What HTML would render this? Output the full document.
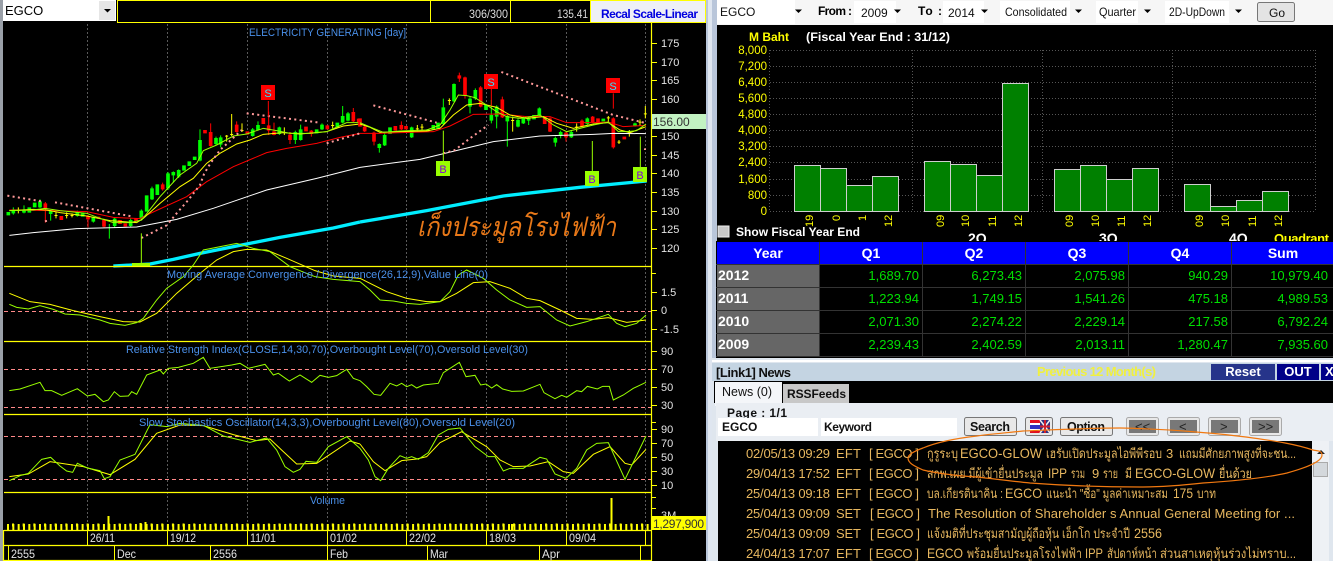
<!DOCTYPE html>
<html><head><meta charset="utf-8"><title>EGCO</title>
<style>
html,body{margin:0;padding:0;background:#000;width:1333px;height:561px;overflow:hidden}
svg{display:block}
text{font-family:"Liberation Sans","Noto Sans CJK SC",sans-serif;white-space:pre}
.t{fill:#4a90ea;font-size:11px}
.ax{fill:#e4e4e4;font-size:11px}
.dt{fill:#e4e4e4;font-size:12px}
.yl{fill:#ffff00;font-size:11.500px;text-anchor:end}
.bl{fill:#ffff00;font-size:11px}
.v{fill:#00e000;font-size:13px;text-anchor:end}
.y{fill:#fff;font-size:14px;font-weight:bold}
.h{fill:#fff;font-size:14px;font-weight:bold;text-anchor:middle}
.n{fill:#e8b860;font-size:13px}
.s{fill:#111;font-size:12px}
.b{fill:#000;font-size:12px;font-weight:bold}
</style></head><body>
<svg width="1333" height="561" viewBox="0 0 1333 561" xmlns="http://www.w3.org/2000/svg">
<rect width="1333" height="561" fill="#000"/>
<!-- left strip -->
<rect x="0" width="3" height="561" fill="#9aa0a8"/>
<!-- splitter -->
<rect x="706" width="11" height="561" fill="#b9c6da"/>
<rect x="708" width="4" height="561" fill="#dfe6f0"/>

<!-- LEFT top bar -->
<rect x="3" y="0" width="113" height="21" fill="#fff"/>
<rect x="99" y="1" width="16" height="19" fill="#e6e6e6"/>
<path d="M104 9h7l-3.500 3.500z" fill="#000"/>
<text x="5" y="15" style="font-size:13px" fill="#000">EGCO</text>
<rect x="117.500" y="0.500" width="588" height="22" fill="none" stroke="#ff0"/>
<path d="M430.500 0V22M510.500 0V22M590.500 0V22" stroke="#ff0"/>
<rect x="591" y="1" width="114" height="21" fill="#eef0f6"/>
<text x="469" y="18" style="font-size:12px" fill="#ddd" textLength="39" lengthAdjust="spacingAndGlyphs">306/300</text>
<text x="557" y="18" style="font-size:12px" fill="#ddd" textLength="31" lengthAdjust="spacingAndGlyphs">135.41</text>
<text x="601" y="18" style="font-size:12px;font-weight:bold" fill="#0000e0" textLength="97">Recal Scale-Linear</text>

<!-- vertical grid -->
<path d="M87.500 24V530M167.500 24V530M247.500 24V530M327.500 24V530M406.500 24V530M486.500 24V530M566.500 24V530M645.500 24V530" stroke="#5a5a5a" stroke-dasharray="2 2"/>

<text x="249" y="36" class="t" textLength="157" lengthAdjust="spacingAndGlyphs">ELECTRICITY GENERATING [day]</text>

<!-- CHART part 1 (3x coords) -->
<g transform="scale(.33333)" fill="none">
<path stroke="#00ff00" stroke-width="3" d="M40 622V644M72 616V640M120 598V624M152 630V662M232 632V650M280 650V668M328 672V716M344 652V682M392 656V682M424 628V660M456 560V600M504 516V570M520 514V548M536 508V534M600 388V484M648 410V436M662 406V442M758 384V410M774 364V392M838 380V405M886 392V432M902 374V422M966 370V390M1028 318V370M1044 336V364"/>
<path stroke="#00ff00" stroke-width="11" d="M25 636V646M40 628V640M72 630V638M88 622V638M104 608V622M120 604V622M152 632V642M232 636V648M248 640V650M280 652V665M344 656V678M392 660V678M424 632V655M440 586V635M456 565V598M472 553V585M504 520V565M520 516V526M536 510V530M552 496V512M568 484V498M584 470V480M600 420V482M648 414V432M662 412V434M758 388V408M774 375V390M838 382V402M886 396V420M902 388V420M950 388V400M966 374V388M1012 368V382M1028 348V368M1044 340V362"/>
<path stroke="#ff0000" stroke-width="3" d="M136 606V668M264 645V682M488 548V572M632 370V440M710 364V398M806 335V405M822 368V406M870 396V432M934 390V410M1060 324V366M312 656V682"/>
<path stroke="#ff0000" stroke-width="11" d="M136 610V625M184 648V660M264 648V658M296 650V656M312 660V680M360 660V672M376 670V680M408 655V665M488 553V568M615 390V400M632 396V438M710 374V396M742 394V404M790 354V372M806 376V392M822 394V405M870 404V420M918 380V394M934 392V402M982 376V388M1060 336V364M1076 356V366"/>
<path stroke="#ffff00" stroke-width="3" d="M55 622V640M168 635V655M200 637V655M216 640V652M680 405V425M695 342V408M726 370V396M853 382V405M998 365V385"/>
<path stroke="#ffff00" stroke-width="9" d="M55 630V633M168 645V648M200 645V648M216 645V648M680 407V410M695 402V405M726 390V393M853 396V399M998 375V378"/>
<path stroke="#ffffff" stroke-width="3" d="M28 706L100 698L230 686L410 681L530 658L640 625L800 570L950 535L1080 502"/>
<path stroke="#ff0000" stroke-width="3" d="M28 630L160 632L260 635L340 652L420 656L440 645L560 590L620 545L700 500L800 458L860 445L950 430L1020 412L1080 400"/>
<path stroke="#ffff00" stroke-width="3" d="M28 632L100 628L140 630L180 638L260 648L330 662L410 668L430 655L480 610L540 560L580 535L620 490L660 460L710 432L750 420L790 403L850 398L900 402L980 395L1030 378L1080 372"/>
<path stroke="#99ff00" stroke-width="3" d="M28 632L100 630L135 625L180 632L260 640L300 655L340 668L390 668L425 660L480 590L540 525L590 490L610 452L650 435L700 408L740 402L790 385L830 392L870 400L930 400L980 395L1040 368L1080 368"/>
<path stroke="#00eeff" stroke-width="10" d="M340 798L450 792L520 778L600 760L740 732L840 712L1000 684L1080 666"/>
<path stroke="#ff9999" stroke-width="6" stroke-dasharray="6 10" d="M22 587L130 605M135 664L150 660M165 607L400 650M424 714L500 676L530 640L565 600L600 555L612 522L630 492L660 450L680 432L725 390M740 340L960 368M980 430L1080 400"/>
<path stroke="#ff0000" stroke-width="3" d="M805 303V350"/>
<path stroke="#99ff00" stroke-width="3" d="M424 700V790"/>
</g>
<rect x="261" y="85" width="14" height="15" fill="#f00"/>
<text x="268" y="97" text-anchor="middle" fill="#33e0ff" style="font-size:11px">S</text>

<!-- CHART part 2 -->
<g transform="translate(360,0) scale(.33333)" fill="none">
<path stroke="#00ff00" stroke-width="3" d="M74 400V438M58 430V458M155 380V414M250 296V375M282 250V306M330 290V340M346 265V300M394 300V370M410 316V385M442 345V440M474 355V382M490 350V372M506 350V375M538 322V348M586 410V440M602 392V415M634 392V414M682 352V375M825 368V380"/>
<path stroke="#00ff00" stroke-width="11" d="M58 432V444M74 405V436M90 382V402M155 382V412M203 388V396M220 375V388M234 368V385M250 322V372M282 252V304M330 296V320M346 270V296M378 315V330M394 345V362M410 320V350M442 348V364M474 360V380M490 355V370M506 355V362M522 345V358M538 325V345M586 414V428M602 396V408M634 396V412M682 355V372M730 356V364M825 370V378"/>
<path stroke="#ff0000" stroke-width="3" d="M42 395V436M124 364V390M298 218V246M315 230V296M362 258V322M427 290V354M570 352V396M618 396V425M666 358V382M698 348V368M760 352V446M14 375V396"/>
<path stroke="#ff0000" stroke-width="11" d="M0 355V380M14 380V394M42 398V425M106 378V392M124 375V388M138 378V388M298 226V236M315 232V286M362 262V320M427 298V352M554 348V372M570 355V395M618 398V412M666 362V380M698 350V366M714 355V372M760 355V442M793 410V418"/>
<path stroke="#ffff00" stroke-width="3" d="M172 375V395M186 372V392M268 295V315M458 350V395M650 370V395M745 348V368M777 420V432M808 390V410M840 358V378M856 318V355"/>
<path stroke="#ffff00" stroke-width="9" d="M172 385V388M186 380V383M268 300V303M458 360V363M650 380V383M745 352V355M777 425V428M808 395V398M840 365V368M856 340V343"/>
<path stroke="#ffffff" stroke-width="3" d="M0 502L180 478L400 425L540 408L700 403L760 400L858 401"/>
<path stroke="#ff0000" stroke-width="3" d="M0 400L60 400L220 395L270 378L340 343L420 342L500 350L570 350L620 368L700 368L745 366L790 380L858 376"/>
<path stroke="#ffff00" stroke-width="3" d="M0 372L30 382L60 397L120 395L200 393L240 385L280 345L320 315L360 310L410 322L450 345L500 355L550 350L590 370L640 385L700 372L745 368L780 390L810 398L858 380"/>
<path stroke="#99ff00" stroke-width="3" d="M0 368L40 385L70 397L120 393L200 390L240 375L270 330L295 285L320 287L345 293L375 312L410 335L440 350L480 355L540 345L580 375L620 395L660 385L700 375L745 366L775 395L800 395L830 392L858 372"/>
<path stroke="#00eeff" stroke-width="10" d="M0 666L200 632L430 588L660 562L860 543"/>
<path stroke="#ff9999" stroke-width="6" stroke-dasharray="6 10" d="M40 316L230 368M250 460L285 450L330 415L385 375M424 216L760 345L860 370M855 445V450"/>
<path stroke="#ff0000" stroke-width="3" d="M394 266V318M760 280V326"/>
<path stroke="#99ff00" stroke-width="3" d="M250 392V484M697 423V514M841 410V502"/>
</g>
<rect x="484" y="74" width="14" height="15" fill="#f00"/>
<text x="491" y="86" text-anchor="middle" fill="#33e0ff" style="font-size:11px">S</text>
<rect x="606" y="78" width="14" height="15" fill="#f00"/>
<text x="613" y="90" text-anchor="middle" fill="#33e0ff" style="font-size:11px">S</text>
<rect x="436" y="161" width="14" height="15" fill="#99ff00"/>
<text x="443" y="173" text-anchor="middle" fill="#8000e0" style="font-size:11px">B</text>
<rect x="585" y="171" width="14" height="15" fill="#99ff00"/>
<text x="592" y="183" text-anchor="middle" fill="#8000e0" style="font-size:11px">B</text>
<rect x="633" y="167" width="14" height="15" fill="#99ff00"/>
<text x="640" y="179" text-anchor="middle" fill="#8000e0" style="font-size:11px">B</text>
<rect x="132" y="263" width="18" height="3" fill="#99ff00"/>

<!-- Thai caption -->
<text x="417" y="236" fill="#e87818" font-style="italic" style="font-size:27px" textLength="199" lengthAdjust="spacingAndGlyphs">เก็งประมูลโรงไฟฟ้า</text>

<!-- panel lines -->
<path d="M4 266.500H651M4 341.500H651M4 414.500H651M4 492.500H651M4 530.500H651M4 545.500H651M4 560.500H651M651.500 22V561M3.500 530V561" stroke="#ffff00" stroke-width="1.200"/>
<path d="M87.500 530V545M167.500 530V545M247.500 530V545M327.500 530V545M406.500 530V545M486.500 530V545M566.500 530V545M645.500 530V545M8.500 545V560M114.500 545V560M210.500 545V560M327.500 545V560M427.500 545V560M539.500 545V560M640.500 545V560" stroke="#ffff00"/>

<!-- dashed levels -->
<path d="M4 311.500H651M4 369.500H651M4 407.500H651M4 436.500H651M4 479.500H651" stroke="#ff8888" stroke-dasharray="4 3"/>

<!-- Indicators -->
<g transform="translate(0,260) scale(.33333)" fill="none" stroke-width="3">
<path stroke="#ffff00" d="M28 100L90 125L150 133L220 152L300 170L370 185L420 186L470 160L530 100L600 40L650 0L700 -25L740 -32L800 -30L860 -5L945 32L1000 48L1080 55"/>
<path stroke="#99ff00" d="M28 133L50 142L85 147L120 137L160 148L195 162L240 165L300 180L330 190L375 196L410 188L430 175L470 120L500 85L550 50L580 15L610 -30L670 -42L710 -50L760 -35L810 -25L870 20L945 50L1000 58L1080 65"/>
<path stroke="#99ff00" d="M28 392L60 387L120 367L135 392L155 392L185 406L232 386L262 408L285 403L310 425L325 420L343 395L360 409L385 408L395 395L410 403L440 345L480 330L490 342L505 325L535 322L580 310L610 292L630 325L695 315L720 310L745 325L795 313L820 345L835 340L868 363L900 345L935 367L960 346L985 352L1010 347L1040 328L1060 355L1080 362"/>
<path stroke="#ffff00" d="M28 650L85 642L150 605L250 620L330 644L405 598L470 520L540 495L610 497L700 524L770 542L810 537L850 575L890 612L950 610L1050 543L1080 552"/>
<path stroke="#99ff00" d="M28 662L60 647L85 640L125 598L152 592L180 618L200 633L218 637L232 610L262 624L300 632L313 656L330 650L360 600L405 583L450 494L500 500L540 490L610 496L670 528L750 547L800 534L830 570L855 620L880 637L900 628L918 604L950 607L985 560L1040 530L1080 565"/>
</g>
<g transform="translate(360,260) scale(.33333)" fill="none" stroke-width="3">
<path stroke="#ffff00" d="M0 55L80 95L140 115L200 125L240 125L290 100L340 68L390 65L450 85L500 115L540 122L600 150L650 175L700 178L745 173L800 187L858 180"/>
<path stroke="#99ff00" d="M0 65L30 90L60 120L100 123L140 130L180 133L240 125L270 95L295 45L320 30L370 55L410 90L450 120L500 142L540 140L590 180L630 198L680 185L745 163L770 190L795 200L830 190L858 165"/>
<path stroke="#99ff00" d="M0 362L20 380L42 403L62 406L90 370L110 378L125 370L140 380L155 374L170 384L190 375L235 370L250 338L275 322L298 307L318 350L345 346L362 375L378 372L395 384L410 374L428 387L455 394L490 393L540 373L552 398L585 416L605 406L620 412L650 392L665 395L682 379L712 387L728 379L748 379L760 420L790 405L820 385L858 367"/>
<path stroke="#ffff00" d="M0 552L40 605L75 632L125 602L170 597L200 590L240 548L305 515L380 560L420 600L460 620L510 618L565 605L610 635L640 640L700 583L750 560L795 610L815 615L858 568"/>
<path stroke="#99ff00" d="M0 565L25 600L45 650L62 662L85 625L120 587L140 595L155 590L175 598L205 578L235 525L265 508L300 504L345 560L385 590L405 590L430 633L450 625L490 625L540 592L560 597L585 642L618 655L650 625L680 570L710 550L745 548L795 658L858 528"/>
</g>

<!-- Volume -->
<path d="M7 527H650" stroke="#ffff00" stroke-width="6" stroke-dasharray="2 3.330"/>
<path d="M12 525H650" stroke="#ffff00" stroke-width="3" stroke-dasharray="2 8.660"/>
<path d="M108.500 516V530M140.500 523V530M145.500 522V530M611.500 498V530M512 524V530" stroke="#ffff00" stroke-width="2"/>

<!-- Indicator titles -->
<text x="167" y="278" class="t" textLength="321" lengthAdjust="spacingAndGlyphs">Moving Average Convergence / Divergence(26,12,9),Value Line(0)</text>
<text x="126" y="353" class="t" textLength="402" lengthAdjust="spacingAndGlyphs">Relative Strength Index(CLOSE,14,30,70),Overbought Level(70),Oversold Level(30)</text>
<text x="139" y="426" class="t" textLength="376" lengthAdjust="spacingAndGlyphs">Slow Stochastics Oscillator(14,3,3),Overbought Level(80),Oversold Level(20)</text>
<text x="310" y="504" class="t" textLength="35" lengthAdjust="spacingAndGlyphs">Volume</text>

<!-- Date labels -->
<text x="90" y="542" class="dt" textLength="25" lengthAdjust="spacingAndGlyphs">26/11</text><text x="170" y="542" class="dt" textLength="26" lengthAdjust="spacingAndGlyphs">19/12</text><text x="250" y="542" class="dt" textLength="26" lengthAdjust="spacingAndGlyphs">11/01</text><text x="330" y="542" class="dt" textLength="27" lengthAdjust="spacingAndGlyphs">01/02</text><text x="409" y="542" class="dt" textLength="27" lengthAdjust="spacingAndGlyphs">22/02</text><text x="489" y="542" class="dt" textLength="27" lengthAdjust="spacingAndGlyphs">18/03</text><text x="569" y="542" class="dt" textLength="27" lengthAdjust="spacingAndGlyphs">09/04</text>
<text x="11" y="558" class="dt" textLength="24" lengthAdjust="spacingAndGlyphs">2555</text><text x="117" y="558" class="dt" textLength="19" lengthAdjust="spacingAndGlyphs">Dec</text><text x="213" y="558" class="dt" textLength="24" lengthAdjust="spacingAndGlyphs">2556</text><text x="330" y="558" class="dt" textLength="18" lengthAdjust="spacingAndGlyphs">Feb</text><text x="430" y="558" class="dt" textLength="18" lengthAdjust="spacingAndGlyphs">Mar</text><text x="542" y="558" class="dt" textLength="18" lengthAdjust="spacingAndGlyphs">Apr</text>

<!-- Axis ticks -->
<path d="M652 43.500h5M652 62.500h5M652 80.500h5M652 99.500h5M652 136.500h5M652 155.500h5M652 173.500h5M652 192.500h5M652 211.500h5M652 229.500h5M652 248.500h5M652 273.500h4M652 292.500h5M652 310.500h5M652 329.500h5M652 351.500h5M652 369.500h5M652 387.500h5M652 405.500h5M652 422.500h4M652 429.500h5M652 443.500h5M652 457.500h5M652 471.500h5M652 485.500h5M652 497.500h4M652 508.500h4" stroke="#ffff00"/>
<text x="661" y="47" class="ax">175</text><text x="661" y="66" class="ax">170</text><text x="661" y="84" class="ax">165</text><text x="661" y="103" class="ax">160</text><text x="661" y="140" class="ax">150</text><text x="661" y="159" class="ax">145</text><text x="661" y="177" class="ax">140</text><text x="661" y="196" class="ax">135</text><text x="661" y="215" class="ax">130</text><text x="661" y="233" class="ax">125</text><text x="661" y="252" class="ax">120</text>
<text x="661" y="296" class="ax">1.5</text><text x="661" y="314" class="ax">0</text><text x="660" y="333" class="ax">-1.5</text>
<text x="661" y="355" class="ax">90</text><text x="661" y="373" class="ax">70</text><text x="661" y="391" class="ax">50</text><text x="661" y="409" class="ax">30</text>
<text x="661" y="433" class="ax">90</text><text x="661" y="447" class="ax">70</text><text x="661" y="461" class="ax">50</text><text x="661" y="475" class="ax">30</text><text x="661" y="489" class="ax">10</text>
<text x="661" y="519" class="ax">3M</text>
<rect x="652" y="114" width="54" height="15" fill="#c2f2c2"/>
<text x="653" y="126" style="font-size:12px" fill="#333">156.00</text>
<rect x="652" y="516" width="54" height="14" fill="#ffff00"/>
<text x="653" y="528" style="font-size:12px" fill="#333" textLength="51">1,297,900</text>

<!-- RIGHT top bar -->
<rect x="717" y="0" width="616" height="25" fill="#f6f6f6"/>
<rect x="717" y="0" width="78" height="24" fill="#fff"/>
<rect x="854" y="1" width="42" height="22" fill="#fff"/>
<rect x="943" y="1" width="41" height="22" fill="#fff"/>
<rect x="1000" y="1" width="70" height="22" fill="#fff"/>
<rect x="1096" y="1" width="42" height="22" fill="#fff"/>
<rect x="1165" y="1" width="64" height="22" fill="#fff"/>
<path d="M795 9.500h7l-3.500 3.500zM894 9.500h7l-3.500 3.500zM981 9.500h7l-3.500 3.500zM1075 9.500h7l-3.500 3.500zM1144 9.500h7l-3.500 3.500zM1235 9.500h7l-3.500 3.500z" fill="#000"/>
<text x="720" y="16" class="s">EGCO</text>
<text x="818" y="15" class="b" style="font-size:12px" textLength="34">From :</text>
<text x="861" y="17" class="s">2009</text>
<text x="918" y="15" class="b" textLength="24">To :</text>
<text x="948" y="17" class="s">2014</text>
<text x="1005" y="16" class="s" textLength="62" lengthAdjust="spacingAndGlyphs">Consolidated</text>
<text x="1099" y="16" class="s" textLength="37" lengthAdjust="spacingAndGlyphs">Quarter</text>
<text x="1169" y="16" class="s" textLength="56" lengthAdjust="spacingAndGlyphs">2D-UpDown</text>
<rect x="1257.500" y="2.500" width="37" height="19" rx="2" fill="#e4e4e4" stroke="#777"/>
<text x="1269" y="17" class="s">Go</text>

<!-- Bar chart -->
<text x="749" y="41" style="font-size:12px;font-weight:bold" fill="#ffff00">M Baht</text>
<text x="806" y="41" style="font-size:12px;font-weight:bold" fill="#fff" textLength="144" lengthAdjust="spacingAndGlyphs">(Fiscal Year End : 31/12)</text>
<path d="M770 50.500H1316M770 66.500H1316M770 82.500H1316M770 98.500H1316M770 114.500H1316M770 130.500H1316M770 146.500H1316M770 162.500H1316M770 179.500H1316M770 195.500H1316M770 211.500H1316M912.500 50V211M1042.500 50V211M1172.500 50V211M1315.500 50V211M769.500 50V211" stroke="#555" stroke-dasharray="1 2"/>
<g text-anchor="end">
<text x="767" y="54" class="yl">8,000</text><text x="767" y="70" class="yl">7,200</text><text x="767" y="86" class="yl">6,400</text><text x="767" y="102" class="yl">5,600</text><text x="767" y="118" class="yl">4,800</text><text x="767" y="134" class="yl">4,000</text><text x="767" y="150" class="yl">3,200</text><text x="767" y="166" class="yl">2,400</text><text x="767" y="183" class="yl">1,600</text><text x="767" y="199" class="yl">800</text><text x="767" y="215" class="yl">0</text>
</g>
<g fill="#008000" stroke="#cfcfcf">
<rect x="794.500" y="165.500" width="26" height="46"/><rect x="820.500" y="168.500" width="26" height="43"/><rect x="846.500" y="185.500" width="26" height="26"/><rect x="872.500" y="176.500" width="26" height="35"/>
<rect x="924.500" y="161.500" width="26" height="50"/><rect x="950.500" y="164.500" width="26" height="47"/><rect x="976.500" y="175.500" width="26" height="36"/><rect x="1002.500" y="83.500" width="26" height="128"/>
<rect x="1054.500" y="169.500" width="26" height="42"/><rect x="1080.500" y="165.500" width="26" height="46"/><rect x="1106.500" y="179.500" width="26" height="32"/><rect x="1132.500" y="168.500" width="26" height="43"/>
<rect x="1184.500" y="184.500" width="26" height="27"/><rect x="1210.500" y="206.500" width="26" height="5"/><rect x="1236.500" y="200.500" width="26" height="11"/><rect x="1262.500" y="191.500" width="26" height="20"/>
</g>
<g>
<text transform="translate(813,227) rotate(-90)" class="bl">19</text><text transform="translate(840,221) rotate(-90)" class="bl">0</text><text transform="translate(866,221) rotate(-90)" class="bl">1</text><text transform="translate(892,227) rotate(-90)" class="bl">12</text>
<text transform="translate(944,227) rotate(-90)" class="bl">09</text><text transform="translate(969,227) rotate(-90)" class="bl">10</text><text transform="translate(996,227) rotate(-90)" class="bl">11</text><text transform="translate(1022,227) rotate(-90)" class="bl">12</text>
<text transform="translate(1073,227) rotate(-90)" class="bl">09</text><text transform="translate(1099,227) rotate(-90)" class="bl">10</text><text transform="translate(1125,227) rotate(-90)" class="bl">11</text><text transform="translate(1151,227) rotate(-90)" class="bl">12</text>
<text transform="translate(1203,227) rotate(-90)" class="bl">09</text><text transform="translate(1229,227) rotate(-90)" class="bl">10</text><text transform="translate(1256,227) rotate(-90)" class="bl">11</text><text transform="translate(1282,227) rotate(-90)" class="bl">12</text>
</g>
<rect x="718" y="226" width="11" height="11" fill="#c8c8c8" stroke="#eee"/>
<text x="736" y="236" style="font-size:12px;font-weight:bold" fill="#fff" textLength="124" lengthAdjust="spacingAndGlyphs">Show Fiscal Year End</text>
<text x="968" y="243" fill="#fff" style="font-size:14px;font-weight:bold">2Q</text><text x="1099" y="243" fill="#fff" style="font-size:14px;font-weight:bold">3Q</text><text x="1229" y="243" fill="#fff" style="font-size:14px;font-weight:bold">4Q</text><text x="1274" y="243" fill="#ffff00" style="font-size:13px;font-weight:bold" textLength="55">Quadrant</text>

<!-- Table -->
<rect x="716" y="241" width="617" height="117" fill="#000"/>
<rect x="717" y="242" width="616" height="22" fill="#0000ff"/>
<rect x="717" y="264" width="102" height="92" fill="#666"/>
<path d="M716 264.500H1333M716 287.500H1333M716 310.500H1333M716 333.500H1333M716 356.500H1333M819.500 242V356M922.500 242V356M1025.500 242V356M1128.500 242V356M1231.500 242V356" stroke="#333"/>
<text x="768" y="258" class="h">Year</text><text x="871" y="258" class="h">Q1</text><text x="974" y="258" class="h">Q2</text><text x="1077" y="258" class="h">Q3</text><text x="1180" y="258" class="h">Q4</text><text x="1283" y="258" class="h">Sum</text>
<text x="718" y="280" class="y">2012</text><text x="718" y="303" class="y">2011</text><text x="718" y="326" class="y">2010</text><text x="718" y="349" class="y">2009</text>
<text x="919" y="280" class="v">1,689.70</text><text x="1022" y="280" class="v">6,273.43</text><text x="1125" y="280" class="v">2,075.98</text><text x="1228" y="280" class="v">940.29</text><text x="1328" y="280" class="v">10,979.40</text>
<text x="919" y="303" class="v">1,223.94</text><text x="1022" y="303" class="v">1,749.15</text><text x="1125" y="303" class="v">1,541.26</text><text x="1228" y="303" class="v">475.18</text><text x="1328" y="303" class="v">4,989.53</text>
<text x="919" y="326" class="v">2,071.30</text><text x="1022" y="326" class="v">2,274.22</text><text x="1125" y="326" class="v">2,229.14</text><text x="1228" y="326" class="v">217.58</text><text x="1328" y="326" class="v">6,792.24</text>
<text x="919" y="349" class="v">2,239.43</text><text x="1022" y="349" class="v">2,402.59</text><text x="1125" y="349" class="v">2,013.11</text><text x="1228" y="349" class="v">1,280.47</text><text x="1328" y="349" class="v">7,935.60</text>

<!-- News header -->
<rect x="712" y="358" width="621" height="203" fill="#dfe6ee"/>
<rect x="712" y="363" width="621" height="18" fill="#c4d4e2"/>
<rect x="712" y="360" width="621" height="2" fill="#fff"/>
<text x="716" y="377" style="font-size:13px;font-weight:bold" fill="#111" textLength="75">[Link1] News</text>
<text x="1037" y="376" style="font-size:13px;font-weight:bold" fill="#f0f040" textLength="119">Previous 12 Month(s)</text>
<rect x="1211" y="364" width="64" height="16" fill="#26348a"/>
<text x="1243" y="376" text-anchor="middle" style="font-size:13px;font-weight:bold" fill="#fff">Reset</text>
<rect x="1277" y="364" width="42" height="16" fill="#000088"/>
<text x="1298" y="376" text-anchor="middle" style="font-size:13px;font-weight:bold" fill="#fff">OUT</text>
<rect x="1321" y="364" width="12" height="16" fill="#000088"/>
<text x="1325" y="376" style="font-size:13px;font-weight:bold" fill="#fff">X</text>

<!-- Tabs -->
<rect x="714" y="381" width="619" height="22" fill="#000"/>
<rect x="715" y="382" width="67" height="24" fill="#f4f6f9"/>
<text x="722" y="396" style="font-size:12.500px" fill="#111" textLength="50">News (0)</text>
<rect x="783" y="384" width="66" height="20" fill="#c8c8c8"/>
<text x="787" y="398" style="font-size:12px;font-weight:bold" fill="#111" textLength="59">RSSFeeds</text>
<rect x="716" y="403" width="617" height="38" fill="#eaeef3"/>
<text x="727" y="417" style="font-size:12px;font-weight:bold" fill="#111" textLength="60">Page : 1/1</text>
<rect x="718" y="418" width="100" height="18" fill="#fff"/>
<rect x="821" y="418" width="136" height="18" fill="#fff"/>
<text x="722" y="431" style="font-size:12px;font-weight:bold" fill="#111">EGCO</text>
<text x="824" y="431" style="font-size:12px;font-weight:bold" fill="#111" textLength="48">Keyword</text>
<rect x="964.500" y="417.500" width="52" height="18" rx="2" fill="#e8e8e8" stroke="#777"/>
<text x="970" y="431" style="font-size:12.500px;font-weight:bold" fill="#111" textLength="40">Search</text>
<rect x="1025.500" y="417.500" width="27" height="18" rx="2" fill="#e8e8e8" stroke="#777"/>
<rect x="1030" y="420" width="10" height="3" fill="#e01020"/><rect x="1030" y="423" width="10" height="8" fill="#3030c0"/><rect x="1030" y="423" width="10" height="2" fill="#fff"/><rect x="1030" y="429" width="10" height="2" fill="#fff"/><rect x="1030" y="431" width="10" height="2" fill="#e01020"/>
<rect x="1040" y="420" width="10" height="13" fill="#303080"/><path d="M1040 420l10 13M1050 420l-10 13" stroke="#eee" stroke-width="1.500"/><path d="M1045 420v13M1040 426.500h10" stroke="#d02030" stroke-width="2"/>
<rect x="1060.500" y="417.500" width="52" height="18" rx="2" fill="#e8e8e8" stroke="#777"/>
<text x="1067" y="431" style="font-size:12.500px;font-weight:bold" fill="#111" textLength="38">Option</text>
<g fill="#e8e8e8" stroke="#aaa"><rect x="1126.500" y="417.500" width="32" height="18" rx="2"/><rect x="1167.500" y="417.500" width="32" height="18" rx="2"/><rect x="1208.500" y="417.500" width="32" height="18" rx="2"/><rect x="1249.500" y="417.500" width="32" height="18" rx="2"/></g>
<g fill="#787878"><rect x="1129" y="420" width="27" height="13"/><rect x="1170" y="420" width="27" height="13"/><rect x="1211" y="420" width="27" height="13"/><rect x="1252" y="420" width="27" height="13"/></g>
<text x="1135" y="431" fill="#222" style="font-size:13px">&lt;&lt;</text><text x="1179" y="431" fill="#222" style="font-size:13px">&lt;</text><text x="1220" y="431" fill="#222" style="font-size:13px">&gt;</text><text x="1258" y="431" fill="#222" style="font-size:13px">&gt;&gt;</text>

<!-- News list -->
<rect x="718" y="441" width="594" height="120" fill="#000"/>
<rect x="1312" y="441" width="17" height="120" fill="#eef1f5"/>
<path d="M1317 454l4-4 4 4z" fill="#222"/>
<rect x="1313.500" y="462.500" width="14" height="14" fill="#d4d8dc" stroke="#aaa"/>

<text x="746" y="458" class="n" textLength="84">02/05/13 09:29</text><text x="836" y="458" class="n" textLength="25">EFT</text><text x="869" y="458" class="n" textLength="50">[ EGCO ]</text>
<text x="927" y="458" class="n" textLength="31" lengthAdjust="spacingAndGlyphs">กูรูระบุ</text><text x="960" y="458" class="n" style="font-size:14px" textLength="82" lengthAdjust="spacingAndGlyphs">EGCO-GLOW</text><text x="1046" y="458" class="n" textLength="116" lengthAdjust="spacingAndGlyphs">เฮรับเปิดประมูลไอพีพีรอบ</text><text x="1166" y="458" class="n">3</text><text x="1179" y="458" class="n" textLength="117" lengthAdjust="spacingAndGlyphs">แถมมีศักยภาพสูงที่จะชน...</text>
<text x="746" y="478" class="n" textLength="84">29/04/13 17:52</text><text x="836" y="478" class="n" textLength="25">EFT</text><text x="869" y="478" class="n" textLength="50">[ EGCO ]</text>
<text x="927" y="478" class="n" textLength="116" lengthAdjust="spacingAndGlyphs">สกพ.เผย มีผู้เข้ายื่นประมูล</text><text x="1048" y="478" class="n" style="font-size:14px" textLength="19" lengthAdjust="spacingAndGlyphs">IPP</text><text x="1071" y="478" class="n" textLength="14" lengthAdjust="spacingAndGlyphs">รวม</text><text x="1092" y="478" class="n">9</text><text x="1103" y="478" class="n" textLength="15" lengthAdjust="spacingAndGlyphs">ราย</text><text x="1125" y="478" class="n" textLength="7" lengthAdjust="spacingAndGlyphs">มี</text><text x="1135" y="478" class="n" style="font-size:14px" textLength="80" lengthAdjust="spacingAndGlyphs">EGCO-GLOW</text><text x="1219" y="478" class="n" textLength="33" lengthAdjust="spacingAndGlyphs">ยื่นด้วย</text>
<text x="746" y="498" class="n" textLength="84">25/04/13 09:18</text><text x="836" y="498" class="n" textLength="25">EFT</text><text x="869" y="498" class="n" textLength="50">[ EGCO ]</text>
<text x="927" y="498" class="n" textLength="76" lengthAdjust="spacingAndGlyphs">บล.เกียรตินาคิน :</text><text x="1005" y="498" class="n" style="font-size:14px" textLength="37" lengthAdjust="spacingAndGlyphs">EGCO</text><text x="1046" y="498" class="n" textLength="122" lengthAdjust="spacingAndGlyphs">แนะนำ "ซื้อ" มูลค่าเหมาะสม</text><text x="1173" y="498" class="n" style="font-size:14px" textLength="20" lengthAdjust="spacingAndGlyphs">175</text><text x="1197" y="498" class="n" textLength="19" lengthAdjust="spacingAndGlyphs">บาท</text>
<text x="746" y="518" class="n" textLength="84">25/04/13 09:09</text><text x="836" y="518" class="n" textLength="25">SET</text><text x="870" y="518" class="n" textLength="50">[ EGCO ]</text>
<text x="928" y="518" class="n" textLength="367">The Resolution of Shareholder s Annual General Meeting for ...</text>
<text x="746" y="538" class="n" textLength="84">25/04/13 09:09</text><text x="836" y="538" class="n" textLength="25">SET</text><text x="870" y="538" class="n" textLength="50">[ EGCO ]</text>
<text x="927" y="538" class="n" textLength="203" lengthAdjust="spacingAndGlyphs">แจ้งมติที่ประชุมสามัญผู้ถือหุ้น เอ็กโก ประจำปี</text><text x="1134" y="538" class="n" style="font-size:14px" textLength="28" lengthAdjust="spacingAndGlyphs">2556</text>
<text x="746" y="558" class="n" textLength="84">24/04/13 17:07</text><text x="836" y="558" class="n" textLength="25">EFT</text><text x="869" y="558" class="n" textLength="50">[ EGCO ]</text>
<text x="927" y="558" class="n" style="font-size:14px" textLength="36" lengthAdjust="spacingAndGlyphs">EGCO</text><text x="967" y="558" class="n" textLength="115" lengthAdjust="spacingAndGlyphs">พร้อมยื่นประมูลโรงไฟฟ้า</text><text x="1085" y="558" class="n" style="font-size:14px" textLength="18" lengthAdjust="spacingAndGlyphs">IPP</text><text x="1107" y="558" class="n" textLength="50" lengthAdjust="spacingAndGlyphs">สัปดาห์หน้า</text><text x="1160" y="558" class="n" textLength="136" lengthAdjust="spacingAndGlyphs">ส่วนสาเหตุหุ้นร่วงไม่ทราบ...</text>

<!-- Orange ellipse annotation -->
<path d="M1322 455C1322 450 1316 451 1313 450C1295 444 1275 441 1253 438C1225 434 1170 429 1120 428C1090 428 1050 430 1023 431C1005 433 990 434 977 436C950 439 935 443 923 448C912 452 908 455 908 458C908 463 914 466 923 470C940 474 960 476 977 477C995 479 1010 481 1030 483C1070 486 1105 487 1140 487C1165 487 1185 485 1203 483C1235 481 1265 478 1287 473C1305 468 1322 462 1322 455Z" fill="none" stroke="#f07810" stroke-width="1.200"/>
</svg>
</body></html>
